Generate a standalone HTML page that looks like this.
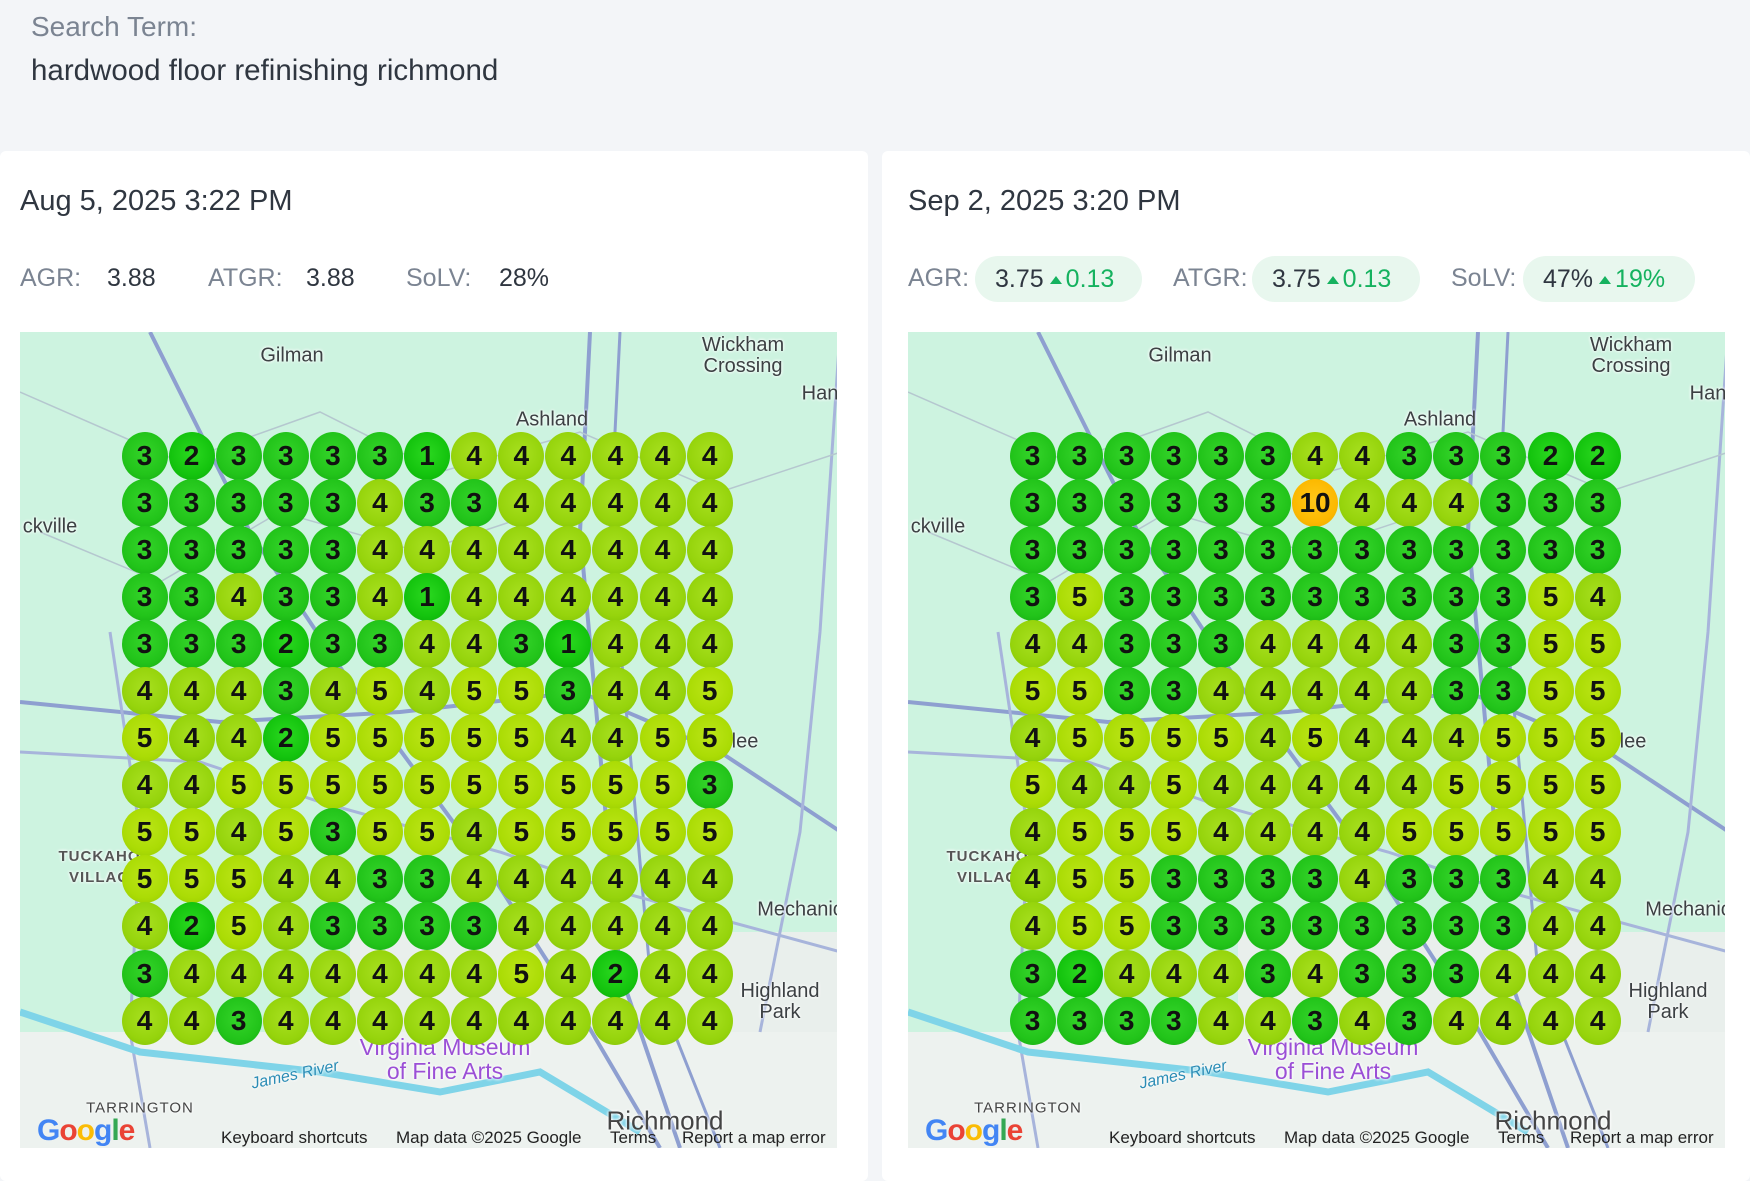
<!DOCTYPE html>
<html><head><meta charset="utf-8"><style>
*{margin:0;padding:0;box-sizing:border-box}
body{width:1750px;height:1170px;overflow:hidden;background:#f3f5f8;font-family:"Liberation Sans",sans-serif;position:relative}
.st{position:absolute;left:31px;top:11px;font-size:28px;color:#7b8492}
.term{position:absolute;left:31px;top:54px;font-size:29.5px;color:#2f3640}
.card{position:absolute;top:151px;height:1030px;background:#fff;border-radius:6px}
.date{position:absolute;left:20px;top:185px;font-size:29px;color:#2f3640}
.lab{position:absolute;top:264px;font-size:25px;color:#7b8492}
.val{position:absolute;top:264px;font-size:25px;color:#2f3640}
.pill{position:absolute;top:256px;height:46px;border-radius:23px;background:#e8f7ee;font-size:25px;color:#2f3640;line-height:46px;padding-left:20px;white-space:nowrap}
.pill b{font-weight:normal;color:#15b25f}
.pill s{text-decoration:none;display:inline-block;width:0;height:0;border-left:6px solid transparent;border-right:6px solid transparent;border-bottom:8px solid #15b25f;margin:0 4px 0 6px;vertical-align:3px}
.map{position:absolute;top:332px;width:817px;height:816px;background:#cdf3e0;overflow:hidden}
.map svg{position:absolute;left:0;top:0}
.ml{position:absolute;font-size:20px;color:#3c4043;white-space:nowrap;text-shadow:0 0 3px #fff,0 0 3px #fff;transform:translate(-50%,-50%);text-align:center;line-height:21px}
.grid{position:absolute;left:101px;top:100px;display:grid;grid-template-columns:repeat(13,47.1px);grid-auto-rows:47.1px}
.grid i{font-style:normal;display:block;width:46px;height:48px;margin:-0.5px 0 0 0.5px;border-radius:50%;font-size:28px;font-weight:bold;color:#111;text-align:center;line-height:48px}
.g3{background:radial-gradient(circle at 50% 45%,#35d42a 0%,#22c41a 60%,#15a812 100%)}
.g2{background:radial-gradient(circle at 50% 45%,#2bd820 0%,#14c40e 60%,#0aa808 100%)}
.g4{background:radial-gradient(circle at 50% 45%,#a8e020 0%,#96d40c 60%,#7fbf05 100%)}
.g5{background:radial-gradient(circle at 50% 45%,#bce518 0%,#abdc05 60%,#94c700 100%)}
.g10{background:radial-gradient(circle at 50% 45%,#ffc81a 0%,#fcb900 60%,#e9a500 100%)}
.foot{position:absolute;top:796px;font-size:17px;color:#222;white-space:nowrap}
.gl{position:absolute;left:17px;top:782px;font-size:30px;font-weight:bold;letter-spacing:-1px}
</style></head><body>
<div class="st">Search Term:</div>
<div class="term">hardwood floor refinishing richmond</div>

<div class="card" style="left:0;width:868px"></div>
<div class="card" style="left:882px;width:868px"></div>

<div class="date">Aug 5, 2025 3:22 PM</div>
<div class="lab" style="left:20px">AGR:</div><div class="val" style="left:107px">3.88</div>
<div class="lab" style="left:208px">ATGR:</div><div class="val" style="left:306px">3.88</div>
<div class="lab" style="left:406px">SoLV:</div><div class="val" style="left:499px">28%</div>

<div class="date" style="left:908px">Sep 2, 2025 3:20 PM</div>
<div class="lab" style="left:908px">AGR:</div><div class="pill" style="left:975px;width:167px">3.75<s></s><b>0.13</b></div>
<div class="lab" style="left:1173px">ATGR:</div><div class="pill" style="left:1252px;width:168px">3.75<s></s><b>0.13</b></div>
<div class="lab" style="left:1451px">SoLV:</div><div class="pill" style="left:1523px;width:172px">47%<s></s><b>19%</b></div>

<!-- LEFT MAP -->
<div class="map" style="left:20px">
<svg width="821" height="816"><g fill="none">
<path d="M0 700 L821 700 L821 816 L0 816Z" fill="#edf2ef" stroke="none"/>
<path d="M330 600 L821 600 L821 700 L330 700Z" fill="#e9efec" stroke="none"/>
<path d="M130 0 L230 200 L330 350 L470 540 L560 680 L640 816" stroke="#8e9fd0" stroke-width="4"/>
<path d="M570 0 L560 200 L580 420 L600 640 L660 816" stroke="#8e9fd0" stroke-width="4"/>
<path d="M600 0 L590 200 L610 420 L630 640 L700 816" stroke="#8e9fd0" stroke-width="3"/>
<path d="M0 370 L200 390 L380 380 L560 360 L700 420 L821 500" stroke="#8e9fd0" stroke-width="4"/>
<path d="M0 420 L180 430 L300 470 L480 520 L600 560 L821 620" stroke="#a7b4db" stroke-width="3"/>
<path d="M90 300 L120 500 L110 700 L130 816" stroke="#a7b4db" stroke-width="3"/>
<path d="M820 0 L800 300 L780 500 L740 700" stroke="#a7b4db" stroke-width="3"/>
<path d="M0 680 L120 720 L300 740 L420 760 L520 740 L620 800" stroke="#7fd4e8" stroke-width="7"/>
<path d="M0 60 L160 130 L300 80 L420 140 L560 100 L700 160 L821 120" stroke="#b5c7cf" stroke-width="1.5"/>
<path d="M20 200 L140 250 L260 180 L400 220 L520 180" stroke="#b5c7cf" stroke-width="1.5"/>
</g></svg>
<div class="ml" style="left:272px;top:24px">Gilman</div>
<div class="ml" style="left:723px;top:24px">Wickham<br>Crossing</div>
<div class="ml" style="left:532px;top:88px">Ashland</div>
<div class="ml" style="left:30px;top:195px">ckville</div>
<div class="ml" style="left:805px;top:62px">Hanc</div>
<div class="ml" style="left:725px;top:410px">lee</div>
<div class="ml" style="left:780px;top:578px">Mechanic</div>
<div class="ml" style="left:760px;top:670px">Highland<br>Park</div>
<div class="ml" style="left:85px;top:535px;font-size:15px;letter-spacing:1px;font-weight:bold;color:#555">TUCKAHOE<br>VILLAGE</div>
<div class="ml" style="left:425px;top:727px;color:#9b4fd6;font-size:23px;line-height:24px">Virginia Museum<br>of Fine Arts</div>
<div class="ml" style="left:275px;top:743px;color:#2a8cb5;font-size:16px;font-style:italic;transform:translate(-50%,-50%) rotate(-12deg)">James River</div>
<div class="ml" style="left:120px;top:776px;font-size:15px;letter-spacing:1px;color:#444">TARRINGTON</div>
<div class="ml" style="left:645px;top:789px;font-size:26px;color:#444">Richmond</div>
<div class="gl"><span style="color:#4285f4">G</span><span style="color:#ea4335">o</span><span style="color:#fbbc05">o</span><span style="color:#4285f4">g</span><span style="color:#34a853">l</span><span style="color:#ea4335">e</span></div>
<div class="foot" style="left:201px">Keyboard shortcuts</div>
<div class="foot" style="left:376px">Map data ©2025 Google</div>
<div class="foot" style="left:590px">Terms</div>
<div class="foot" style="left:662px">Report a map error</div>
<div class="grid">
<i class="g3">3</i><i class="g2">2</i><i class="g3">3</i><i class="g3">3</i><i class="g3">3</i><i class="g3">3</i><i class="g2">1</i><i class="g4">4</i><i class="g4">4</i><i class="g4">4</i><i class="g4">4</i><i class="g4">4</i><i class="g4">4</i>
<i class="g3">3</i><i class="g3">3</i><i class="g3">3</i><i class="g3">3</i><i class="g3">3</i><i class="g4">4</i><i class="g3">3</i><i class="g3">3</i><i class="g4">4</i><i class="g4">4</i><i class="g4">4</i><i class="g4">4</i><i class="g4">4</i>
<i class="g3">3</i><i class="g3">3</i><i class="g3">3</i><i class="g3">3</i><i class="g3">3</i><i class="g4">4</i><i class="g4">4</i><i class="g4">4</i><i class="g4">4</i><i class="g4">4</i><i class="g4">4</i><i class="g4">4</i><i class="g4">4</i>
<i class="g3">3</i><i class="g3">3</i><i class="g4">4</i><i class="g3">3</i><i class="g3">3</i><i class="g4">4</i><i class="g2">1</i><i class="g4">4</i><i class="g4">4</i><i class="g4">4</i><i class="g4">4</i><i class="g4">4</i><i class="g4">4</i>
<i class="g3">3</i><i class="g3">3</i><i class="g3">3</i><i class="g2">2</i><i class="g3">3</i><i class="g3">3</i><i class="g4">4</i><i class="g4">4</i><i class="g3">3</i><i class="g2">1</i><i class="g4">4</i><i class="g4">4</i><i class="g4">4</i>
<i class="g4">4</i><i class="g4">4</i><i class="g4">4</i><i class="g3">3</i><i class="g4">4</i><i class="g5">5</i><i class="g4">4</i><i class="g5">5</i><i class="g5">5</i><i class="g3">3</i><i class="g4">4</i><i class="g4">4</i><i class="g5">5</i>
<i class="g5">5</i><i class="g4">4</i><i class="g4">4</i><i class="g2">2</i><i class="g5">5</i><i class="g5">5</i><i class="g5">5</i><i class="g5">5</i><i class="g5">5</i><i class="g4">4</i><i class="g4">4</i><i class="g5">5</i><i class="g5">5</i>
<i class="g4">4</i><i class="g4">4</i><i class="g5">5</i><i class="g5">5</i><i class="g5">5</i><i class="g5">5</i><i class="g5">5</i><i class="g5">5</i><i class="g5">5</i><i class="g5">5</i><i class="g5">5</i><i class="g5">5</i><i class="g3">3</i>
<i class="g5">5</i><i class="g5">5</i><i class="g4">4</i><i class="g5">5</i><i class="g3">3</i><i class="g5">5</i><i class="g5">5</i><i class="g4">4</i><i class="g5">5</i><i class="g5">5</i><i class="g5">5</i><i class="g5">5</i><i class="g5">5</i>
<i class="g5">5</i><i class="g5">5</i><i class="g5">5</i><i class="g4">4</i><i class="g4">4</i><i class="g3">3</i><i class="g3">3</i><i class="g4">4</i><i class="g4">4</i><i class="g4">4</i><i class="g4">4</i><i class="g4">4</i><i class="g4">4</i>
<i class="g4">4</i><i class="g2">2</i><i class="g5">5</i><i class="g4">4</i><i class="g3">3</i><i class="g3">3</i><i class="g3">3</i><i class="g3">3</i><i class="g4">4</i><i class="g4">4</i><i class="g4">4</i><i class="g4">4</i><i class="g4">4</i>
<i class="g3">3</i><i class="g4">4</i><i class="g4">4</i><i class="g4">4</i><i class="g4">4</i><i class="g4">4</i><i class="g4">4</i><i class="g4">4</i><i class="g5">5</i><i class="g4">4</i><i class="g2">2</i><i class="g4">4</i><i class="g4">4</i>
<i class="g4">4</i><i class="g4">4</i><i class="g3">3</i><i class="g4">4</i><i class="g4">4</i><i class="g4">4</i><i class="g4">4</i><i class="g4">4</i><i class="g4">4</i><i class="g4">4</i><i class="g4">4</i><i class="g4">4</i><i class="g4">4</i>
</div>
</div>

<!-- RIGHT MAP -->
<div class="map" style="left:908px">
<svg width="821" height="816"><g fill="none">
<path d="M0 700 L821 700 L821 816 L0 816Z" fill="#edf2ef" stroke="none"/>
<path d="M330 600 L821 600 L821 700 L330 700Z" fill="#e9efec" stroke="none"/>
<path d="M130 0 L230 200 L330 350 L470 540 L560 680 L640 816" stroke="#8e9fd0" stroke-width="4"/>
<path d="M570 0 L560 200 L580 420 L600 640 L660 816" stroke="#8e9fd0" stroke-width="4"/>
<path d="M600 0 L590 200 L610 420 L630 640 L700 816" stroke="#8e9fd0" stroke-width="3"/>
<path d="M0 370 L200 390 L380 380 L560 360 L700 420 L821 500" stroke="#8e9fd0" stroke-width="4"/>
<path d="M0 420 L180 430 L300 470 L480 520 L600 560 L821 620" stroke="#a7b4db" stroke-width="3"/>
<path d="M90 300 L120 500 L110 700 L130 816" stroke="#a7b4db" stroke-width="3"/>
<path d="M820 0 L800 300 L780 500 L740 700" stroke="#a7b4db" stroke-width="3"/>
<path d="M0 680 L120 720 L300 740 L420 760 L520 740 L620 800" stroke="#7fd4e8" stroke-width="7"/>
<path d="M0 60 L160 130 L300 80 L420 140 L560 100 L700 160 L821 120" stroke="#b5c7cf" stroke-width="1.5"/>
<path d="M20 200 L140 250 L260 180 L400 220 L520 180" stroke="#b5c7cf" stroke-width="1.5"/>
</g></svg>
<div class="ml" style="left:272px;top:24px">Gilman</div>
<div class="ml" style="left:723px;top:24px">Wickham<br>Crossing</div>
<div class="ml" style="left:532px;top:88px">Ashland</div>
<div class="ml" style="left:30px;top:195px">ckville</div>
<div class="ml" style="left:805px;top:62px">Hanc</div>
<div class="ml" style="left:725px;top:410px">lee</div>
<div class="ml" style="left:780px;top:578px">Mechanic</div>
<div class="ml" style="left:760px;top:670px">Highland<br>Park</div>
<div class="ml" style="left:85px;top:535px;font-size:15px;letter-spacing:1px;font-weight:bold;color:#555">TUCKAHOE<br>VILLAGE</div>
<div class="ml" style="left:425px;top:727px;color:#9b4fd6;font-size:23px;line-height:24px">Virginia Museum<br>of Fine Arts</div>
<div class="ml" style="left:275px;top:743px;color:#2a8cb5;font-size:16px;font-style:italic;transform:translate(-50%,-50%) rotate(-12deg)">James River</div>
<div class="ml" style="left:120px;top:776px;font-size:15px;letter-spacing:1px;color:#444">TARRINGTON</div>
<div class="ml" style="left:645px;top:789px;font-size:26px;color:#444">Richmond</div>
<div class="gl"><span style="color:#4285f4">G</span><span style="color:#ea4335">o</span><span style="color:#fbbc05">o</span><span style="color:#4285f4">g</span><span style="color:#34a853">l</span><span style="color:#ea4335">e</span></div>
<div class="foot" style="left:201px">Keyboard shortcuts</div>
<div class="foot" style="left:376px">Map data ©2025 Google</div>
<div class="foot" style="left:590px">Terms</div>
<div class="foot" style="left:662px">Report a map error</div>
<div class="grid">
<i class="g3">3</i><i class="g3">3</i><i class="g3">3</i><i class="g3">3</i><i class="g3">3</i><i class="g3">3</i><i class="g4">4</i><i class="g4">4</i><i class="g3">3</i><i class="g3">3</i><i class="g3">3</i><i class="g2">2</i><i class="g2">2</i>
<i class="g3">3</i><i class="g3">3</i><i class="g3">3</i><i class="g3">3</i><i class="g3">3</i><i class="g3">3</i><i class="g10">10</i><i class="g4">4</i><i class="g4">4</i><i class="g4">4</i><i class="g3">3</i><i class="g3">3</i><i class="g3">3</i>
<i class="g3">3</i><i class="g3">3</i><i class="g3">3</i><i class="g3">3</i><i class="g3">3</i><i class="g3">3</i><i class="g3">3</i><i class="g3">3</i><i class="g3">3</i><i class="g3">3</i><i class="g3">3</i><i class="g3">3</i><i class="g3">3</i>
<i class="g3">3</i><i class="g5">5</i><i class="g3">3</i><i class="g3">3</i><i class="g3">3</i><i class="g3">3</i><i class="g3">3</i><i class="g3">3</i><i class="g3">3</i><i class="g3">3</i><i class="g3">3</i><i class="g5">5</i><i class="g4">4</i>
<i class="g4">4</i><i class="g4">4</i><i class="g3">3</i><i class="g3">3</i><i class="g3">3</i><i class="g4">4</i><i class="g4">4</i><i class="g4">4</i><i class="g4">4</i><i class="g3">3</i><i class="g3">3</i><i class="g5">5</i><i class="g5">5</i>
<i class="g5">5</i><i class="g5">5</i><i class="g3">3</i><i class="g3">3</i><i class="g4">4</i><i class="g4">4</i><i class="g4">4</i><i class="g4">4</i><i class="g4">4</i><i class="g3">3</i><i class="g3">3</i><i class="g5">5</i><i class="g5">5</i>
<i class="g4">4</i><i class="g5">5</i><i class="g5">5</i><i class="g5">5</i><i class="g5">5</i><i class="g4">4</i><i class="g5">5</i><i class="g4">4</i><i class="g4">4</i><i class="g4">4</i><i class="g5">5</i><i class="g5">5</i><i class="g5">5</i>
<i class="g5">5</i><i class="g4">4</i><i class="g4">4</i><i class="g5">5</i><i class="g4">4</i><i class="g4">4</i><i class="g4">4</i><i class="g4">4</i><i class="g4">4</i><i class="g5">5</i><i class="g5">5</i><i class="g5">5</i><i class="g5">5</i>
<i class="g4">4</i><i class="g5">5</i><i class="g5">5</i><i class="g5">5</i><i class="g4">4</i><i class="g4">4</i><i class="g4">4</i><i class="g4">4</i><i class="g5">5</i><i class="g5">5</i><i class="g5">5</i><i class="g5">5</i><i class="g5">5</i>
<i class="g4">4</i><i class="g5">5</i><i class="g5">5</i><i class="g3">3</i><i class="g3">3</i><i class="g3">3</i><i class="g3">3</i><i class="g4">4</i><i class="g3">3</i><i class="g3">3</i><i class="g3">3</i><i class="g4">4</i><i class="g4">4</i>
<i class="g4">4</i><i class="g5">5</i><i class="g5">5</i><i class="g3">3</i><i class="g3">3</i><i class="g3">3</i><i class="g3">3</i><i class="g3">3</i><i class="g3">3</i><i class="g3">3</i><i class="g3">3</i><i class="g4">4</i><i class="g4">4</i>
<i class="g3">3</i><i class="g2">2</i><i class="g4">4</i><i class="g4">4</i><i class="g4">4</i><i class="g3">3</i><i class="g4">4</i><i class="g3">3</i><i class="g3">3</i><i class="g3">3</i><i class="g4">4</i><i class="g4">4</i><i class="g4">4</i>
<i class="g3">3</i><i class="g3">3</i><i class="g3">3</i><i class="g3">3</i><i class="g4">4</i><i class="g4">4</i><i class="g3">3</i><i class="g4">4</i><i class="g3">3</i><i class="g4">4</i><i class="g4">4</i><i class="g4">4</i><i class="g4">4</i>
</div>
</div>
</body></html>
